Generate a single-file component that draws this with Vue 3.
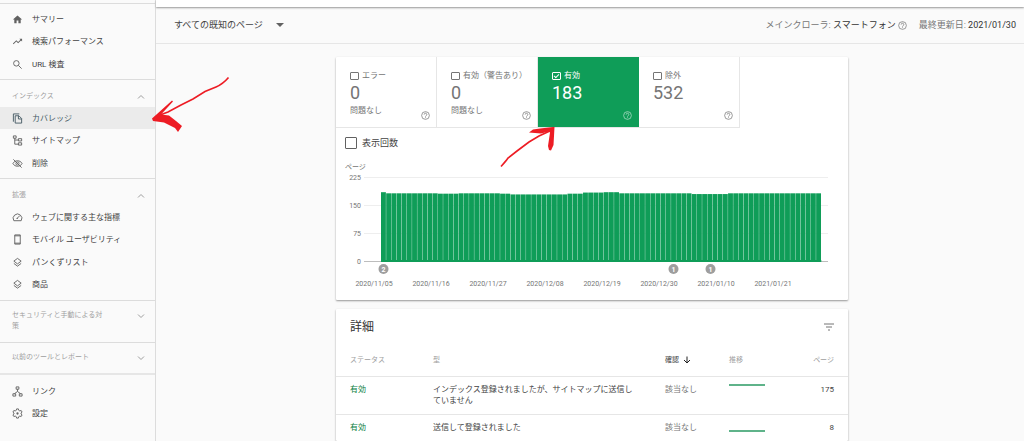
<script setup>
import { ref, computed } from 'vue'

const mainLinks = [
  { label: 'サマリー', icon: 'home' },
  { label: '検索パフォーマンス', icon: 'trend' },
  { label: 'URL 検査', icon: 'search' },
]
const sections = [
  {
    title: 'インデックス',
    links: [
      { label: 'カバレッジ', icon: 'copy', active: true },
      { label: 'サイトマップ', icon: 'tree' },
      { label: '削除', icon: 'hidden' },
    ],
  },
  {
    title: '拡張',
    links: [
      { label: 'ウェブに関する主な指標', icon: 'speed' },
      { label: 'モバイル ユーザビリティ', icon: 'phone' },
      { label: 'パンくずリスト', icon: 'layers' },
      { label: '商品', icon: 'layers' },
    ],
  },
  { title: 'セキュリティと手動による対策', links: [] },
  { title: '以前のツールとレポート', links: [], last: true },
]
const footLinks = [
  { label: 'リンク', icon: 'network' },
  { label: '設定', icon: 'gear' },
]

const icons = {
  home: [{ fill: true, d: 'M10 20v-6h4v6h5v-8h3L12 3 2 12h3v8z' }],
  trend: [{ fill: true, d: 'M16 6l2.3 2.3-4.9 4.9-4-4L2 16.6 3.4 18l6-6 4 4 6.3-6.3L22 12V6z' }],
  search: [{ d: 'M15.5 9.5a6 6 0 1 1-12 0 6 6 0 0 1 12 0zM14 14l7 7' }],
  copy: [{ d: 'M16 2H3v17M7 6h8l6 6v10H7zM14 6v7h7' }],
  tree: [{ d: 'M3 2h6v5H3zM14 8h7v5h-7zM14 17h7v5h-7zM6 7v13h8M6 11h8' }],
  hidden: [{ d: 'M2 12c4-8 16-8 20 0-4 8-16 8-20 0zM15.500 12a3.500 3.500 0 1 1-7 0 3.500 3.500 0 0 1 7 0zM3 3l18 18' }],
  speed: [{ d: 'M4 19a9.500 9.500 0 1 1 16 0zM11 14l6-6M10 14h3' }],
  phone: [{ d: 'M6 2h12v20H6zM6 4h12M6 20h12' }],
  layers: [{ d: 'M12 3l8 6-8 6-8-6zM4 14l8 6 8-6' }],
  network: [{ d: 'M9 2h6v5H9zM2 17h6v5H2zM16 17h6v5h-6zM12 7v5M5 17l7-5 7 5' }],
  gear: [
    { d: 'M10 2h4l.6 3 2.400 1.400 3-1 2 3.500-2.300 2v2.200l2.300 2-2 3.500-3-1-2.400 1.400L14 22h-4l-.6-3L7 17.600l-3 1-2-3.500 2.300-2v-2.200L2 8.900l2-3.500 3 1L9.400 5z' },
    { fill: true, d: 'M14.500 12a2.500 2.500 0 1 1-5 0 2.500 2.500 0 0 1 5 0z' },
  ],
}

const tiles = ref([
  { id: 'error', label: 'エラー', value: '0', note: '問題なし', checked: false },
  { id: 'warn', label: '有効（警告あり）', value: '0', note: '問題なし', checked: false },
  { id: 'valid', label: '有効', value: '183', note: '', checked: true },
  { id: 'excluded', label: '除外', value: '532', note: '', checked: false },
])
const showImpressions = ref(false)

// Runs of [days, indexed pages]
const runs = [[1, 187], [10, 184], [4, 183], [8, 184], [2, 183], [11, 181], [3, 183], [4, 186], [3, 187], [14, 184], [7, 182], [18, 184]]
const baseline = 105
const step = 5.18
const bars = computed(() =>
  runs
    .flatMap(([days, pages]) => Array(days).fill(pages))
    .map((pages, i) => {
      const height = (pages / 225) * 84
      return { x: 45 + i * step, y: baseline - height, height }
    }),
)
const ticks = [
  { label: '225', y: 21 },
  { label: '150', y: 49 },
  { label: '75', y: 77 },
  { label: '0', y: 105 },
]
const dates = ['2020/11/05', '2020/11/16', '2020/11/27', '2020/12/08', '2020/12/19', '2020/12/30', '2021/01/10', '2021/01/21']
const notes = [
  { x: 47, count: 2 },
  { x: 337, count: 1 },
  { x: 374, count: 1 },
]

const rows = [
  { status: '有効', type: 'インデックス登録されましたが、サイトマップに送信していません', check: '該当なし', trend: 1, pages: 175 },
  { status: '有効', type: '送信して登録されました', check: '該当なし', trend: 9, pages: 8 },
]
</script>

<template>
  <div class="shell">
    <nav class="sidebar">
      <ul class="links first">
        <li v-for="l in mainLinks" :key="l.label">
          <a href="#" class="link">
            <svg class="icon" viewBox="0 0 24 24"><path v-for="p in icons[l.icon]" :key="p.d" :d="p.d" :class="{ solid: p.fill }" /></svg>
            {{ l.label }}
          </a>
        </li>
      </ul>
      <section v-for="s in sections" :key="s.title" class="section" :class="{ last: s.last, closed: !s.links.length }">
        <button type="button" class="head">
          <span>{{ s.title }}</span>
          <svg class="chevron" viewBox="0 0 8 8"><path :d="s.links.length ? 'M1 5.500l3-3 3 3' : 'M1 2.500l3 3 3-3'" /></svg>
        </button>
        <ul v-if="s.links.length" class="links">
          <li v-for="l in s.links" :key="l.label">
            <a href="#" class="link" :class="{ active: l.active }">
              <svg class="icon" viewBox="0 0 24 24"><path v-for="p in icons[l.icon]" :key="p.d" :d="p.d" :class="{ solid: p.fill }" /></svg>
              {{ l.label }}
            </a>
          </li>
        </ul>
      </section>
      <ul class="links foot">
        <li v-for="l in footLinks" :key="l.label">
          <a href="#" class="link">
            <svg class="icon" viewBox="0 0 24 24"><path v-for="p in icons[l.icon]" :key="p.d" :d="p.d" :class="{ solid: p.fill }" /></svg>
            {{ l.label }}
          </a>
        </li>
      </ul>
    </nav>

    <main class="main">
      <div class="topstrip"></div>
      <header class="toolbar">
        <button type="button" class="picker">
          すべての既知のページ
          <svg class="caret" viewBox="0 0 8 4"><path d="M0 0h8L4 4z" /></svg>
        </button>
        <div class="meta">
          <span>メインクローラ: <b>スマートフォン</b></span>
          <svg class="help" viewBox="0 0 10 10"><circle cx="5" cy="5" r="4.300" /><path d="M3.500 4a1.500 1.500 0 1 1 2.300 1.200Q5 5.600 5 6.300M5 7v.9" /></svg>
          <span class="updated">最終更新日: <b>2021/01/30</b></span>
        </div>
      </header>

      <div class="content">
        <section class="card">
          <div class="tiles">
            <div v-for="t in tiles" :key="t.id" class="tile" :class="{ on: t.checked }">
              <label class="tile-label"><input v-model="t.checked" type="checkbox" class="box" />{{ t.label }}</label>
              <strong class="value">{{ t.value }}</strong>
              <span class="note">{{ t.note }}</span>
              <svg class="help" viewBox="0 0 10 10"><circle cx="5" cy="5" r="4.300" /><path d="M3.500 4a1.500 1.500 0 1 1 2.300 1.200Q5 5.600 5 6.300M5 7v.9" /></svg>
            </div>
          </div>
          <label class="impressions"><input v-model="showImpressions" type="checkbox" class="box big" />表示回数</label>
          <svg class="chart" viewBox="0 0 512 143">
            <text x="9" y="12">ページ</text>
            <g v-for="t in ticks" :key="t.label">
              <line x1="28" x2="492" :y1="t.y - 0.5" :y2="t.y - 0.5" :class="t.label === '0' ? 'axis' : 'grid'" />
              <text x="25" :y="t.y + 2" text-anchor="end">{{ t.label }}</text>
            </g>
            <rect v-for="(b, i) in bars" :key="i" class="bar" :x="b.x" :y="b.y" :width="step - 0.3" :height="b.height" />
            <rect class="bar" x="45" y="103" :width="bars.length * step" height="2" />
            <g v-for="n in notes" :key="n.x">
              <circle :cx="n.x + 0.5" cy="112" r="5" class="pin" />
              <text :x="n.x + 0.5" y="115" text-anchor="middle" class="pin-text">{{ n.count }}</text>
            </g>
            <text v-for="(d, i) in dates" :key="d" :x="38 + i * 57" y="129" text-anchor="middle">{{ d }}</text>
          </svg>
        </section>

        <section class="card details">
          <div class="details-head">
            <h2>詳細</h2>
            <button type="button" class="filter" aria-label="フィルタ">
              <svg viewBox="0 0 10 8"><path d="M0 1h10M2 4h6M4 7h2" /></svg>
            </button>
          </div>
          <table>
            <colgroup><col class="c-status" /><col /><col class="c-check" /><col class="c-trend" /><col class="c-pages" /></colgroup>
            <thead>
              <tr>
                <th>ステータス</th>
                <th>型</th>
                <th class="sorted">確認<svg class="sort" viewBox="0 0 8 8"><path d="M4 .5v6.500M1 4l3 3 3-3" /></svg></th>
                <th>推移</th>
                <th class="num">ページ</th>
              </tr>
            </thead>
            <tbody>
              <tr v-for="r in rows" :key="r.type">
                <td class="status">{{ r.status }}</td>
                <td class="type">{{ r.type }}</td>
                <td class="check">{{ r.check }}</td>
                <td><svg class="spark" viewBox="0 0 36 11"><line x1="0" x2="36" :y1="r.trend" :y2="r.trend" /></svg></td>
                <td class="num">{{ r.pages }}</td>
              </tr>
            </tbody>
          </table>
        </section>
      </div>
    </main>

    <svg class="arrows" viewBox="0 0 420 110">
      <path d="M77.500 2.500Q72 9 65 12L54 16.500 42 24 30 30 17 37 9 40" class="stroke" />
      <path d="M1 43.500L21 25.500 22 26.500 10 39.500 18 40.500 25 46 31 51 27 57 24 53 13 47.500 2 46z" />
      <path d="M350 91.500Q355 86 357 83L366 76 378 67 388 61 401 55" class="stroke" />
      <path d="M402 52L389 53.500 382 54.500 378 57.500 390 58.500 398 56.500 399 57.500 397 71 398 75 400 75.500 402.500 70 403.500 52z" />
    </svg>
  </div>
</template>

<style>
body {
  background: #fafafa;
}
</style>

<style scoped>
.shell {
  position: relative;
  display: flex;
  min-height: 100vh;
  font-family: Roboto, "Noto Sans CJK JP", sans-serif;
  font-size: 8px;
  line-height: 11px;
  color: #424242;
  background: #fafafa;
}
button {
  font: inherit;
  color: inherit;
  background: none;
  border: 0;
  padding: 0;
  text-align: left;
}
ul {
  list-style: none;
  margin: 0;
  padding: 0;
}
.sidebar {
  flex: 0 0 155px;
  border-right: 1px solid #dcdcdc;
}
.links.first {
  margin-top: 3px;
  border-top: 1px solid #dcdcdc;
  padding: 4px 0;
}
.link {
  display: flex;
  align-items: center;
  gap: 9px;
  height: 22px;
  padding-left: 12px;
  color: #424242;
  text-decoration: none;
}
.links li:nth-child(even) .link {
  height: 23px;
}
.link.active {
  background: #ebebeb;
  color: #455a64;
}
.icon {
  width: 11px;
  height: 11px;
  fill: none;
  stroke: #616161;
  stroke-width: 2;
}
.active .icon {
  stroke: #455a64;
}
.icon .solid {
  fill: #616161;
  stroke: none;
}
.section {
  border-top: 1px solid #dcdcdc;
  padding: 5px 0 4px;
}
.section.closed {
  padding: 9px 0 10px;
}
.section.last {
  border-bottom: 2px solid #e6e6e6;
}
.head {
  display: flex;
  width: 100%;
  min-height: 22px;
  align-items: center;
  justify-content: space-between;
  padding: 0 10px 0 12px;
  font-size: 7px;
  color: #9e9e9e;
}
.head span {
  width: 96px;
}
.closed .head {
  min-height: 11px;
  align-items: flex-start;
}
.chevron {
  width: 8px;
  height: 8px;
  margin-top: 2px;
  fill: none;
  stroke: #9e9e9e;
}
.links.foot {
  padding-top: 5px;
}
.main {
  flex: 1;
  min-width: 0;
  display: flex;
  flex-direction: column;
}
.topstrip {
  height: 7px;
  background: #fff;
  box-shadow: 0 1px 2px #999;
}
.toolbar {
  display: flex;
  justify-content: space-between;
  align-items: center;
  height: 36px;
  padding: 0 8px 0 18px;
  border-bottom: 1px solid #e6e6e6;
  font-size: 9px;
}
.picker {
  display: flex;
  align-items: center;
  gap: 13px;
}
.caret {
  width: 8px;
  height: 4px;
  fill: #616161;
}
.meta {
  display: flex;
  align-items: center;
  color: #757575;
}
.meta b {
  font-weight: 400;
  color: #333;
}
.meta .help {
  margin: 0 12px 0 2px;
}
.help {
  width: 9px;
  height: 9px;
  fill: none;
  stroke: #757575;
  stroke-width: 0.8;
}
.content {
  flex: 1;
  display: flex;
  flex-direction: column;
  gap: 9px;
  width: 100%;
  max-width: 512px;
  margin: 0 auto;
  padding: 13px 0 0 4px;
}
.card {
  background: #fff;
  border-radius: 1px;
  box-shadow: 0 1px 2px rgba(0, 0, 0, 0.4);
}
.tiles {
  display: grid;
  grid-template-columns: repeat(4, 101px);
  border-bottom: 1px solid #e6e6e6;
  width: 404px;
}
.tile {
  position: relative;
  display: flex;
  flex-direction: column;
  height: 70px;
  box-sizing: border-box;
  padding: 13px 0 0 14px;
  border-right: 1px solid #e6e6e6;
  color: #757575;
}
.tile.on {
  background: #0f9d58;
  border-color: #0f9d58;
  color: #fff;
}
.tile-label {
  display: flex;
  align-items: center;
  gap: 3px;
}
.value {
  font-size: 18px;
  line-height: 24px;
  font-weight: 400;
}
.tile .help {
  position: absolute;
  right: 6px;
  bottom: 7px;
}
.tile.on .help {
  stroke: #b7e1cd;
}
.box {
  appearance: none;
  position: relative;
  width: 9px;
  height: 8px;
  box-sizing: border-box;
  margin: 0;
  border: 1px solid currentColor;
  border-radius: 1px;
  color: inherit;
}
.box:checked::after {
  content: "";
  position: absolute;
  left: 1px;
  top: 1px;
  width: 4px;
  height: 2px;
  border: solid currentColor;
  border-width: 0 0 1px 1px;
  transform: rotate(-45deg);
}
.impressions {
  display: flex;
  align-items: center;
  gap: 5px;
  padding: 9px 0 0 9px;
  font-size: 9px;
  line-height: 12px;
}
.box.big {
  width: 12px;
  height: 12px;
  color: #616161;
}
.chart {
  display: block;
  width: 100%;
  margin-top: 8px;
}
.chart text {
  font-size: 7px;
  fill: #757575;
}
.grid {
  stroke: #eee;
}
.axis {
  stroke: #bdbdbd;
}
.bar {
  fill: #0f9d58;
}
.pin {
  fill: #9e9e9e;
}
.chart .pin-text {
  fill: #fff;
  font-weight: 700;
}
.details {
  flex: 1;
}
.details-head {
  display: flex;
  justify-content: space-between;
  align-items: center;
  height: 35px;
  padding: 0 14px;
}
h2 {
  margin: 0;
  font-size: 12px;
  line-height: 16px;
  font-weight: 400;
  color: #333;
}
.filter svg {
  display: block;
  width: 10px;
  height: 8px;
  stroke: #757575;
}
table {
  width: 100%;
  table-layout: fixed;
  border-collapse: collapse;
}
.c-status {
  width: 97px;
}
.c-check {
  width: 64px;
}
.c-trend {
  width: 60px;
}
.c-pages {
  width: 59px;
}
th,
td {
  padding: 0;
  text-align: left;
  vertical-align: top;
  font-weight: 400;
}
th {
  padding: 11px 0 10px;
  font-size: 7px;
  color: #9e9e9e;
}
td {
  padding: 7px 0 8px;
  border-top: 1px solid #e6e6e6;
}
th:first-child,
td:first-child {
  padding-left: 14px;
}
.num {
  text-align: right;
  padding-right: 14px;
}
.sorted {
  color: #424242;
}
.sort {
  width: 8px;
  height: 8px;
  margin-left: 4px;
  vertical-align: middle;
  fill: none;
  stroke: #212121;
}
.status {
  color: #0b8043;
}
.type {
  padding-right: 28px;
}
.check {
  color: #757575;
}
.spark {
  display: block;
  width: 36px;
  height: 11px;
  stroke: #2a9a63;
  stroke-width: 1.5;
}
.arrows {
  position: absolute;
  left: 151px;
  top: 75px;
  width: 420px;
  height: 110px;
  fill: #ed1c24;
  pointer-events: none;
}
.arrows .stroke {
  fill: none;
  stroke: #ed1c24;
  stroke-width: 1.6;
}
</style>
